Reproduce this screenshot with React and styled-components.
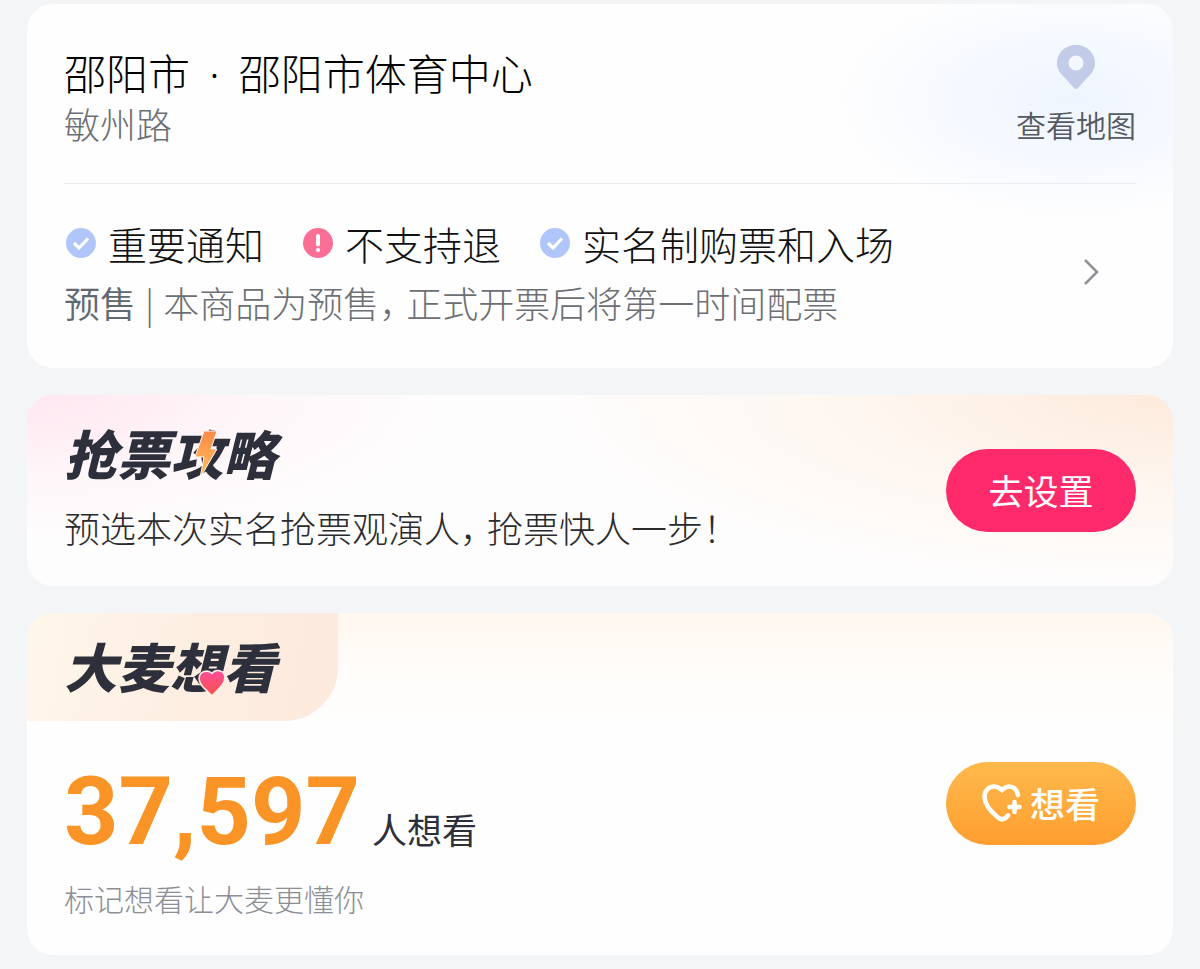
import React from "react";
import styled, { createGlobalStyle } from "styled-components";

const GlobalStyle = createGlobalStyle`
  * { box-sizing: border-box; }
  body {
    margin: 0;
    background: #f3f5f7;
    font-family: "Noto Sans CJK SC", sans-serif;
    font-weight: 300;
    color: #111;
  }
  h1, h2, p, ul { margin: 0; padding: 0; font-weight: inherit; }
  button, a { font: inherit; color: inherit; text-decoration: none; }
  button { border: 0; padding: 0; background: none; cursor: pointer; }
`;

const Page = styled.main`
  display: flex;
  flex-direction: column;
  gap: 27px;
  padding: 4px 27px 14px;
`;

const Card = styled.section`
  border-radius: 26px;
  background: #fff;
  overflow: hidden;
`;

const VenueCard = styled(Card)`
  padding: 0 37px 37px;
  background:
    radial-gradient(ellipse 240px 120px at calc(100% - 100px) 96px, #eff5fe 0%, #f6f9ff 55%, rgba(255, 255, 255, 0) 100%),
    #fefefe;
`;

const VenueRow = styled.div`
  display: flex;
  justify-content: space-between;
  align-items: flex-start;
  padding: 41px 0 36px;
  border-bottom: 1px solid #ebecef;
`;

const VenueName = styled.h1`
  font-size: 42px;
  line-height: 54px;
  color: #000;
`;

const Dot = styled.span`
  margin: 0 10px;
  font-family: "Noto Sans", sans-serif;
  line-height: 1;
`;

const Address = styled.p`
  font-size: 36px;
  line-height: 48px;
  color: #6c6f74;
`;

const MapLink = styled.a`
  display: flex;
  flex-direction: column;
  align-items: center;
  gap: 13px;
  font-size: 30px;
  line-height: 44px;
  font-weight: 350;
  color: #555961;
`;

const Notice = styled.div`
  display: flex;
  align-items: center;
  justify-content: space-between;
  padding-top: 29px;
`;

const Tags = styled.ul`
  display: flex;
  flex-wrap: wrap;
  column-gap: 37px;
  list-style: none;
`;

const Tag = styled.li`
  display: flex;
  align-items: center;
  gap: 10px;
  font-size: 39px;
  line-height: 60px;
`;

const Presale = styled.p`
  font-size: 36px;
  line-height: 58px;
  color: #6c6f74;
`;

const PresaleLabel = styled.span`
  font-weight: 350;
  color: #5f6971;
`;

const Bar = styled.span`
  margin: 0 9px;
`;

const Comma = styled.span`
  margin-right: 9px;
  font-feature-settings: "halt";
`;

const MoreButton = styled.button`
  display: flex;
  padding: 8px 35px 8px 8px;
`;

const GuideCard = styled(Card)`
  display: flex;
  align-items: center;
  justify-content: space-between;
  padding: 0 37px;
  background:
    radial-gradient(ellipse 420px 150px at 0 0, #ffe6f0 0%, rgba(255, 240, 246, 0.6) 50%, rgba(255, 255, 255, 0) 100%),
    radial-gradient(ellipse 620px 190px at 100% 0, #fdeadc 0%, rgba(254, 243, 234, 0.7) 50%, rgba(255, 255, 255, 0) 100%),
    #fefdfd;
`;

const GuideCopy = styled.div`
  padding: 27px 0 35px;
`;

const Heading = styled.h2`
  position: relative;
  width: max-content;
  font-size: 53px;
  line-height: 60px;
  font-weight: 900;
  font-style: italic;
  color: #2d303b;
`;

const Mark = styled.svg`
  position: absolute;
  left: ${(p) => p.$left}px;
  top: ${(p) => p.$top}px;
`;

const GuideText = styled.p`
  margin-top: 21px;
  font-size: 36px;
  line-height: 48px;
  color: #2b2b2e;
`;

const Pill = styled.button`
  display: flex;
  align-items: center;
  justify-content: center;
  gap: 8px;
  flex: none;
  width: 190px;
  height: 83px;
  padding-bottom: 2px;
  border-radius: 42px;
  font-size: 35px;
  font-weight: ${(p) => (p.$warm ? 500 : 400)};
  color: #fff;
  background: ${(p) => (p.$warm ? "linear-gradient(#ffb94c, #ff9e30)" : "#ff2a6b")};
`;

const WishCard = styled(Card)`
  background: linear-gradient(#fff7f0 0, #fffdfb 70px, #fefefe 120px);
`;

const WishTab = styled.div`
  width: max-content;
  padding: 22px 62px 26px 37px;
  border-bottom-right-radius: 54px;
  background: linear-gradient(100deg, #fff6ea, #fdeee2 50%, #fde9dd);
`;

const WishBody = styled.div`
  display: flex;
  align-items: flex-start;
  justify-content: space-between;
  padding: 41px 37px 35px;
`;

const Count = styled.p`
  display: flex;
  align-items: baseline;
  gap: 12px;
  font-size: 35px;
  line-height: 48px;
  font-weight: 400;
  color: #2d303b;
`;

const Number = styled.strong`
  font-family: Roboto, sans-serif;
  font-size: 95px;
  line-height: 100px;
  font-weight: 700;
  color: #fb9426;
`;

const Hint = styled.p`
  margin-top: 14px;
  font-size: 30px;
  line-height: 44px;
  color: #8c8e96;
`;

function PinIcon() {
  return (
    <svg width="40" height="44" viewBox="0 0 40 44" aria-hidden="true">
      <path
        fill="#c2cbe8"
        fillRule="evenodd"
        d="M20 0C9 0 1 8 1 18c0 6 3 10 7 14l10 11q2 2 4 0l10-11c4-4 7-8 7-14C39 8 31 0 20 0Zm0 10.500a7.500 7.500 0 1 1 0 15a7.500 7.500 0 0 1 0-15Z"
      />
    </svg>
  );
}

function CheckIcon() {
  return (
    <svg width="34" height="34" viewBox="0 0 34 34" aria-hidden="true">
      <circle cx="17" cy="17" r="15" fill="#b0c6fa" />
      <path d="M10 17l5 5L24 12.500" fill="none" stroke="#fff" strokeWidth="3.200" />
    </svg>
  );
}

function AlertIcon() {
  return (
    <svg width="34" height="34" viewBox="0 0 34 34" aria-hidden="true">
      <circle cx="17" cy="17" r="15" fill="#fb6f96" />
      <path d="M17 10v8.500" stroke="#fff" strokeWidth="4" strokeLinecap="round" />
      <circle cx="17" cy="24" r="2.100" fill="#fff" />
    </svg>
  );
}

function HeartPlusIcon() {
  return (
    <svg width="40" height="38" viewBox="0 0 40 38" fill="none" stroke="#fff" strokeWidth="4.600" strokeLinecap="round" aria-hidden="true">
      <path d="M36 11C35 5 31 2.500 27 2.500C23.500 2.500 22 4.500 20 6C18 4.500 16 2.500 12 2.500C6.500 2.500 2.500 7 2.500 13C2.500 21 10 28.500 16 33.500Q20 37 24 33.500L26 31.500" />
      <path d="M32.500 18v10M27.500 23h10" />
    </svg>
  );
}

export default function App() {
  return (
    <>
      <GlobalStyle />
      <Page>
        <VenueCard>
          <VenueRow>
            <div>
              <VenueName>邵阳市 <Dot>·</Dot> 邵阳市体育中心</VenueName>
              <Address>敏州路</Address>
            </div>
            <MapLink href="#map">
              <PinIcon />
              查看地图
            </MapLink>
          </VenueRow>
          <Notice>
            <div>
              <Tags>
                <Tag><CheckIcon />重要通知</Tag>
                <Tag><AlertIcon />不支持退</Tag>
                <Tag><CheckIcon />实名制购票和入场</Tag>
              </Tags>
              <Presale>
                <PresaleLabel>预售</PresaleLabel>
                <Bar>|</Bar>
                本商品为预售<Comma>，</Comma>正式开票后将第一时间配票
              </Presale>
            </div>
            <MoreButton aria-label="查看详情">
              <svg width="20" height="28" viewBox="0 0 20 28" fill="none" stroke="#909399" strokeWidth="2.600" aria-hidden="true">
                <path d="M4 2l12 12L4 26" />
              </svg>
            </MoreButton>
          </Notice>
        </VenueCard>

        <GuideCard>
          <GuideCopy>
            <Heading>
              抢票攻略
              <Mark $left={129} $top={8} width="26" height="50" viewBox="0 0 26 50" aria-hidden="true">
                <defs>
                  <linearGradient id="bolt" x1="0" y1="0" x2="0" y2="1">
                    <stop offset="0" stopColor="#fb8a4a" />
                    <stop offset="1" stopColor="#ffc05a" />
                  </linearGradient>
                </defs>
                <path d="M11 1h13l-6 18h6L7 48l4-21H2z" fill="url(#bolt)" stroke="#fff8fa" strokeWidth="1" />
              </Mark>
            </Heading>
            <GuideText>预选本次实名抢票观演人<Comma>，</Comma>抢票快人一步！</GuideText>
          </GuideCopy>
          <Pill>去设置</Pill>
        </GuideCard>

        <WishCard>
          <WishTab>
            <Heading>
              大麦想看
              <Mark $left={133} $top={33} width="30" height="30" viewBox="0 0 28 28" aria-hidden="true">
                <defs>
                  <linearGradient id="heart" x1="0" y1="0" x2="0" y2="1">
                    <stop offset="0" stopColor="#fb4d9b" />
                    <stop offset="1" stopColor="#fd5048" />
                  </linearGradient>
                </defs>
                <path
                  d="M14 5C17 1 26 1 26 9c0 7-7 11-12 17C8 20 2 16 2 10C2 3 10 1 14 5Z"
                  fill="url(#heart)"
                  stroke="#fdf0e6"
                  strokeWidth="1.500"
                />
              </Mark>
            </Heading>
          </WishTab>
          <WishBody>
            <div>
              <Count><Number>37,597</Number>人想看</Count>
              <Hint>标记想看让大麦更懂你</Hint>
            </div>
            <Pill $warm><HeartPlusIcon />想看</Pill>
          </WishBody>
        </WishCard>
      </Page>
    </>
  );
}
